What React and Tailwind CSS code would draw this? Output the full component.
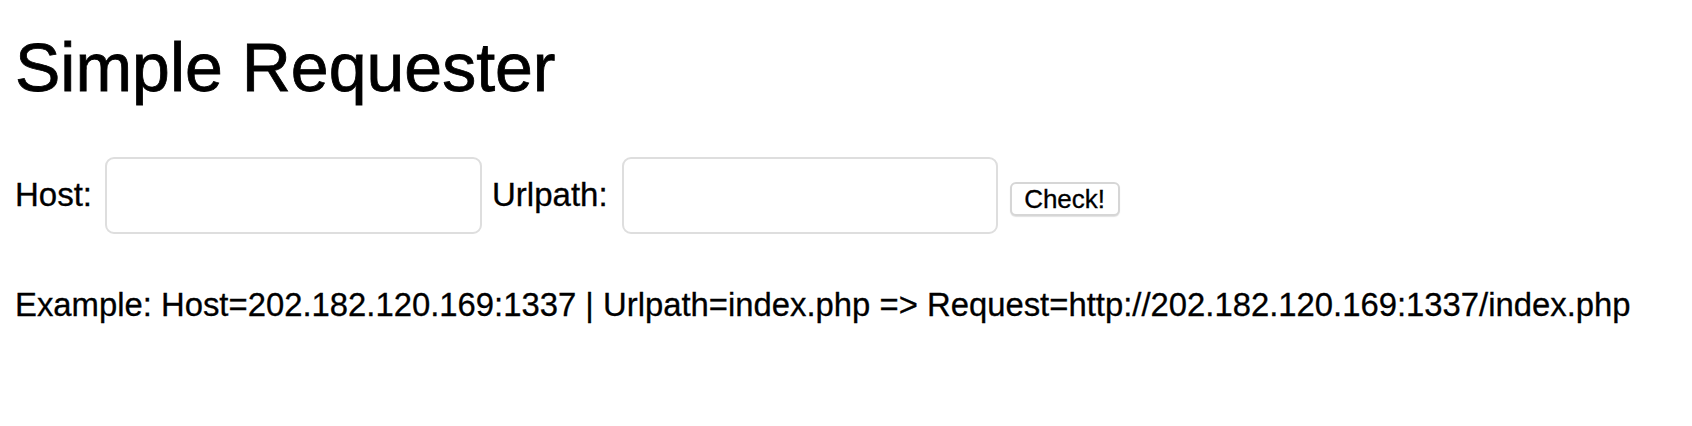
export default function App() {
  const font = { fontFamily: '"Liberation Sans", Arial, Helvetica, sans-serif' };
  return (
    <div className="w-[1692px] h-[426px] bg-white text-black pl-[15px]" style={font}>
      <h1 className="text-[68px] leading-[68px] font-normal pt-[33px] m-0 [-webkit-text-stroke:0.8px_black]">Simple Requester</h1>
      <div className="flex items-start mt-[56px] h-[77px] [-webkit-text-stroke:0.3px_black]">
        <span className="text-[33px] leading-[36px] mt-[20px]">Host:</span>
        <input className="ml-[13px] w-[377px] h-[77px] border-2 border-[#dedede] rounded-[9px] bg-white outline-none" />
        <span className="text-[33px] leading-[36px] mt-[20px] ml-[10px]">Urlpath:</span>
        <input className="ml-[14px] w-[376px] h-[77px] border-2 border-[#dedede] rounded-[9px] bg-white outline-none" />
        <button className="ml-[12px] mt-[25px] w-[110px] h-[34px] border-2 border-[#d6d6d6] rounded-[6px] bg-white shadow-[0_1px_1px_rgba(0,0,0,0.12)] text-[26px] leading-[28px] flex items-center justify-center">Check!</button>
      </div>
      <div className="text-[32.85px] leading-[36px] mt-[53px] [-webkit-text-stroke:0.3px_black]">Example: Host=202.182.120.169:1337 | Urlpath=index.php =&gt; Request=http://202.182.120.169:1337/index.php</div>
    </div>
  );
}
